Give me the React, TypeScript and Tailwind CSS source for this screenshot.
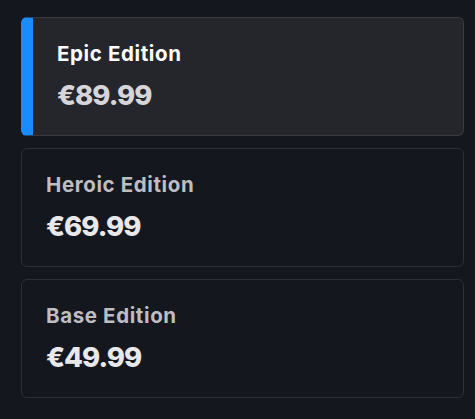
import React from 'react';

const editions = [
  { name: 'Epic Edition', price: '€89.99', active: true },
  { name: 'Heroic Edition', price: '€69.99', active: false },
  { name: 'Base Edition', price: '€49.99', active: false },
];

export default function App() {
  return (
    <div className="min-h-[419px] w-[475px] bg-[#15171e] pt-[17px] pl-[21px] font-['Inter',sans-serif]">
      <div className="flex w-[443px] flex-col gap-[12px]">
        {editions.map((ed) => (
          <div
            key={ed.name}
            className={
              ed.active
                ? 'flex h-[119px] flex-col rounded-md border border-[#3a3b40] border-l-[12px] border-l-[#1a8cff] bg-[#25262b] pl-[24px] pt-[22px]'
                : 'flex h-[119px] flex-col rounded-md border border-[#2e3036] bg-[#15171e] pl-[24px] pt-[22px]'
            }
          >
            <div
              className={
                ed.active
                  ? 'text-[20.5px] leading-[28px] font-bold tracking-[0.03em] text-white'
                  : 'text-[20.5px] leading-[28px] font-bold tracking-[0.03em] text-[#bdbdc2]'
              }
            >
              {ed.name}
            </div>
            <div
              className={
                ed.active
                  ? 'mt-[10px] text-[27.5px] leading-[34px] font-extrabold tracking-[-0.035em] text-[#d6d6da]'
                  : 'mt-[10px] text-[27.5px] leading-[34px] font-extrabold tracking-[-0.035em] text-[#e8e8ea]'
              }
            >
              {ed.price}
            </div>
          </div>
        ))}
      </div>
    </div>
  );
}
